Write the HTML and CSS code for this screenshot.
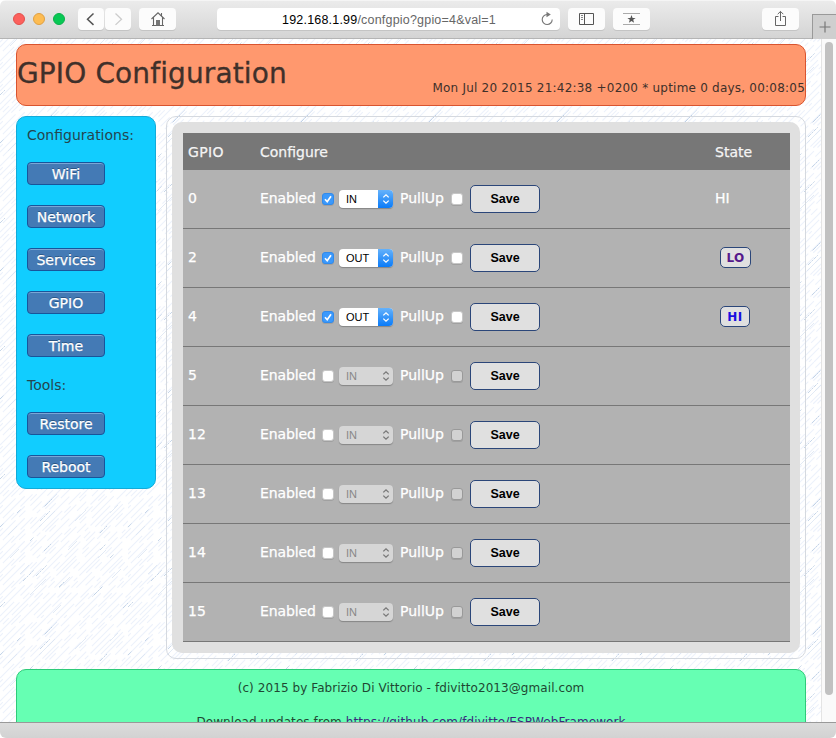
FILE: index.html
```html
<!DOCTYPE html>
<html lang="en">
<head>
<meta charset="utf-8">
<title>GPIO Configuration</title>
<link rel="stylesheet" href="styles.css">
</head>
<body>
<svg class="defs" width="0" height="0">
  <symbol id="arrows" viewBox="0 0 8 12"><path d="M1.300 4.400 4 1.800 6.700 4.400M1.300 7.600 4 10.200 6.700 7.600" fill="none" stroke="currentColor" stroke-width="1.3"/></symbol>
  <symbol id="check" viewBox="0 0 12 12"><path d="M3 6.3 5.2 8.7 9 3.2" fill="none" stroke="#fff" stroke-width="1.7"/></symbol>
</svg>
<div class="window">
  <div class="toolbar">
    <span class="light red"></span><span class="light amber"></span><span class="light green"></span>
    <span class="tool back"><svg width="26" height="22"><path d="M15.5 5.5 9.5 11.2l6 5.7" fill="none" stroke="#555" stroke-width="1.5"/></svg></span>
    <span class="tool forward"><svg width="26" height="22"><path d="m10.5 5.5 6 5.7-6 5.7" fill="none" stroke="#ccc" stroke-width="1.3"/></svg></span>
    <span class="tool home"><svg width="37" height="22"><path d="M12.5 11 19 4.8l6.500 6.200M14.500 9.500V17.400M23.500 9.500V17.400M22.500 5v3M13 17.500H25" fill="none" stroke="#666" stroke-width="1.100"/><path d="M17 12h4v5.500h-4z" fill="#777"/></svg></span>
    <div class="address"><span class="url"><b>192.168.1.99</b>/confgpio?gpio=4&amp;val=1</span>
      <svg class="reload" width="14" height="16"><path d="M7 3.500A5 5 0 1 0 12.200 8.500" fill="none" stroke="#777" stroke-width="1.100"/><path d="M6.500.8 10.800 3.600 6.500 6.300z" fill="#777"/></svg></div>
    <span class="tool side"><svg width="37" height="22"><path d="M11.500 5.500h14v11h-14zM16.500 5.500v11" fill="none" stroke="#555"/><path d="M13 7.500h2M13 9.500h2M13 11.500h2" stroke="#888"/></svg></span>
    <span class="tool fav"><svg width="37" height="22"><path d="M10 5.500h17M10 16.500h17" stroke="#aaa"/><path d="m18.500 7 1.100 2.900h3l-2.400 1.900.9 2.900-2.600-1.700-2.600 1.700.9-2.900-2.400-1.900h3z" fill="#555"/></svg></span>
    <span class="tool share"><svg width="37" height="22"><path d="M16.500 8.500h-3v9h10v-9h-3M18.500 13V3.500M15.700 6.200l2.800-2.800 2.800 2.800" fill="none" stroke="#666"/></svg></span>
    <span class="newtab"><svg width="23" height="24"><path d="M6.500 12h11M12 6.500v11" stroke="#777" stroke-width="1.200"/></svg></span>
  </div>
  <div class="viewport">
    <svg class="texture" width="821" height="683">
      <defs>
        <pattern id="rain" width="128" height="128" patternUnits="userSpaceOnUse" patternTransform="translate(0 67)">
          <g fill="none" stroke="#edf2fb" stroke-width="1.100">
            <path stroke-dasharray="22 5 9 7" d="M0 4 4 0M4 128 128 4M0 24 24 0M24 128 128 24M0 46 46 0M46 128 128 46M0 69 69 0M69 128 128 69M0 91 91 0M91 128 128 91M0 113 113 0M113 128 128 113"/>
            <path stroke-dasharray="13 8 31 11" stroke-dashoffset="17" d="M0 9 9 0M9 128 128 9M0 31 31 0M31 128 128 31M0 53 53 0M53 128 128 53M0 76 76 0M76 128 128 76M0 98 98 0M98 128 128 98M0 120 120 0M120 128 128 120"/>
            <path stroke-dasharray="17 6 5 3 28 9" stroke-dashoffset="39" d="M0 14 14 0M14 128 128 14M0 37 37 0M37 128 128 37M0 60 60 0M60 128 128 60M0 83 83 0M83 128 128 83M0 105 105 0M105 128 128 105M0 126 126 0M126 128 128 126"/>
            <path stroke-dasharray="9 12 19 8" stroke-dashoffset="5" d="M0 18 18 0M18 128 128 18M0 41 41 0M41 128 128 41M0 64 64 0M64 128 128 64M0 87 87 0M87 128 128 87M0 109 109 0M109 128 128 109"/>
          </g>
          <g fill="none" stroke="#dbe5f3" stroke-width=".8">
            <path d="M44 17 57 4M39 37 55 21M75 31 86 20M30 105 46 89M59 98 70 87M92 107 103 96M98 68 106 60M20 84 29 75M110 23 118 15M8 45 17 36M68 60 77 51M112 88 121 79M53 123 61 115M10 68 19 59"/>
          </g>
          <g fill="none" stroke="#b9cbe2" stroke-width=".8" stroke-dasharray="4 1 2 1">
            <path d="M45 16 52 9M40 31 50 21M100 43 107 36M23 91 34 80M36 86 47 75M59 97 64 92M94 105 102 97M44 61 51 54M100 60 106 54M30 51 34 47M0 117 5 112M17 23 21 19M123 118 128 113M0 37 4 33M110 68 114 64"/>
          </g>
        </pattern>
      </defs>
      <rect width="821" height="683" fill="url(#rain)"/>
    </svg>
    <div class="page">
      <header class="banner"><h1>GPIO Configuration</h1><p>Mon Jul 20 2015 21:42:38 +0200 * uptime 0 days, 00:08:05</p></header>
      <div class="columns">
        <nav class="sidebar">
          <p>Configurations:</p>
          <a>WiFi</a><a>Network</a><a>Services</a><a>GPIO</a><a>Time</a>
          <p class="tools">Tools:</p>
          <a>Restore</a><a>Reboot</a>
        </nav>
        <main class="frame"><div class="panel">
          <div class="row head"><span>GPIO</span><span>Configure</span><span>State</span></div>
          <div class="row"><span>0</span><div class="form"><span class="enabled">Enabled</span><i class="box on"><svg><use href="#check"/></svg></i><span class="select">IN<i><svg><use href="#arrows"/></svg></i></span><span class="pull">PullUp</span><i class="box"></i><button>Save</button></div><span>HI</span></div>
          <div class="row"><span>2</span><div class="form"><span class="enabled">Enabled</span><i class="box on"><svg><use href="#check"/></svg></i><span class="select">OUT<i><svg><use href="#arrows"/></svg></i></span><span class="pull">PullUp</span><i class="box"></i><button>Save</button></div><a class="state visited">LO</a></div>
          <div class="row"><span>4</span><div class="form"><span class="enabled">Enabled</span><i class="box on"><svg><use href="#check"/></svg></i><span class="select">OUT<i><svg><use href="#arrows"/></svg></i></span><span class="pull">PullUp</span><i class="box"></i><button>Save</button></div><a class="state">HI</a></div>
          <div class="row off"><span>5</span><div class="form"><span class="enabled">Enabled</span><i class="box"></i><span class="select">IN<i><svg><use href="#arrows"/></svg></i></span><span class="pull">PullUp</span><i class="box dim"></i><button>Save</button></div></div>
          <div class="row off"><span>12</span><div class="form"><span class="enabled">Enabled</span><i class="box"></i><span class="select">IN<i><svg><use href="#arrows"/></svg></i></span><span class="pull">PullUp</span><i class="box dim"></i><button>Save</button></div></div>
          <div class="row off"><span>13</span><div class="form"><span class="enabled">Enabled</span><i class="box"></i><span class="select">IN<i><svg><use href="#arrows"/></svg></i></span><span class="pull">PullUp</span><i class="box dim"></i><button>Save</button></div></div>
          <div class="row off"><span>14</span><div class="form"><span class="enabled">Enabled</span><i class="box"></i><span class="select">IN<i><svg><use href="#arrows"/></svg></i></span><span class="pull">PullUp</span><i class="box dim"></i><button>Save</button></div></div>
          <div class="row off"><span>15</span><div class="form"><span class="enabled">Enabled</span><i class="box"></i><span class="select">IN<i><svg><use href="#arrows"/></svg></i></span><span class="pull">PullUp</span><i class="box dim"></i><button>Save</button></div></div>
        </div></main>
      </div>
      <footer class="footer"><p>(c) 2015 by Fabrizio Di Vittorio - fdivitto2013@gmail.com</p><p>Download updates from <a>https://github.com/fdivitto/ESPWebFramework</a></p></footer>
    </div>
    <div class="scrollbar"><div class="thumb"></div></div>
  </div>
  <div class="bottom"></div>
</div>
</body>
</html>
```
FILE: styles.css
```css
* { box-sizing: border-box; }
body { margin: 0; background: #fff; overflow: hidden; font: 14px/18px Verdana, "DejaVu Sans", sans-serif; color: #333; }
p, h1 { margin: 0; font-weight: 400; }
svg { display: block; }
.defs { position: absolute; }
.window { width: 836px; height: 738px; display: flex; flex-direction: column; border-radius: 6px; overflow: hidden; }

.toolbar { height: 39px; flex: none; display: flex; align-items: flex-start; padding: 7px 0 0 13px; background: linear-gradient(#ebebeb, #d4d4d4); border-bottom: 1px solid #b4b4b4; border-top: 1px solid #f5f5f5; }
.light { width: 12px; height: 12px; border-radius: 50%; margin: 5px 8px 0 0; border: 1px solid; }
.red { background: #fc605c; border-color: #e2504c; }
.amber { background: #fdbc52; border-color: #dfa043; }
.green { background: #08c854; border-color: #0ab04a; }
.tool { height: 22px; width: 37px; background: #fcfcfc; border-radius: 4px; box-shadow: 0 1px 0 #c4c4c4; }
.back { width: 26px; margin-left: 5px; }
.forward { width: 26px; margin-left: 1px; }
.home { margin-left: 8px; }
.address { width: 343px; height: 22px; margin-left: 41px; border-radius: 4px; background: #fff; box-shadow: 0 1px 0 #c4c4c4; display: flex; align-items: center; font: 12.500px/22px "Liberation Sans", Arial, sans-serif; letter-spacing: .2px; color: #666; }
.url { width: 215px; margin: 2px 0 0 65px; white-space: nowrap; }
.url b { font-weight: 400; color: #000; }
.reload { margin-left: 43px; }
.side { margin-left: 8px; }
.fav { margin-left: 8px; }
.share { margin-left: 112px; }
.newtab { width: 24px; height: 25px; margin: 6px 0 0 13px; border: solid #999; border-width: 1px 0 0 1px; background: #cfcfcf; }

.viewport { height: 683px; flex: none; display: flex; position: relative; overflow: hidden; }
.texture { position: absolute; left: 0; top: 0; z-index: -1; }
.page { width: 821px; padding: 5px 15px 0 16px; }
.banner { height: 62px; border: 1px solid #d9542f; border-radius: 10px; background: #ff986e; display: flex; justify-content: space-between; color: #40302a; white-space: nowrap; }
.banner h1 { font-size: 28px; line-height: 57px; letter-spacing: .12px; -webkit-text-stroke: .3px; }
.banner p { font-size: 12px; line-height: 16px; margin-top: 35px; letter-spacing: .22px; }
.columns { display: flex; align-items: flex-start; gap: 10px; margin-top: 10px; }
.sidebar { width: 140px; height: 373px; padding: 9px 10px; border: 1px solid #12abd9; border-radius: 10px; background: #11cdff; display: flex; flex-direction: column; color: #24454e; }
.sidebar a { width: 78px; height: 23px; margin-top: 20px; border: 1px solid #18559b; border-radius: 4px; background: #447ab5; box-shadow: inset 0 1px 0 #7ba7d6; color: #fff; text-align: center; line-height: 22px; text-shadow: 0 -1px 0 #2b5685; -webkit-text-stroke: .25px; }
.sidebar p + a { margin-top: 18px; }
.sidebar .tools { margin-top: 19px; }
.frame { width: 640px; height: 543px; padding: 5px; border: 1px solid #d5d9df; border-radius: 10px; }
.panel { width: 628px; height: 531px; padding: 11px 10px 11px 11px; border-radius: 10px; background: #e0e0e0; }
.row { height: 59px; display: grid; grid-template-columns: 72px 455px 1fr; align-items: center; padding: 0 0 2px 5px; background: #b2b2b2; border-bottom: 1px solid #777; color: #fff; -webkit-text-stroke: .25px; }
.head { height: 37px; background: #777; border: 0; padding-bottom: 0; color: #f4f4f4; }
.head span:first-child { letter-spacing: .4px; }
.form { display: flex; align-items: center; }
.enabled { width: 62px; white-space: nowrap; letter-spacing: -.1px; }
.box { width: 12px; height: 12px; border-radius: 3px; background: #fff; border: 1px solid #c6c6c6; box-shadow: 0 1px 0 #a0a0a0; position: relative; top: 1px; }
.box svg { width: 12px; height: 12px; margin: -1px; }
.on { background: #3b99fc; border-color: #308aec; }
.dim { background: #d2d2d2; border-color: #999; }
.select { width: 54px; height: 18px; margin: 2px 7px 0 5px; padding-left: 7px; display: flex; justify-content: space-between; align-items: center; border-radius: 4px; background: #fff; box-shadow: 0 1px 1px #858585; color: #000; font: 11px/18px "Liberation Sans", Arial, sans-serif; -webkit-text-stroke: 0; }
.select i { width: 15px; height: 18px; padding: 3px 4px; border-radius: 0 4px 4px 0; background: linear-gradient(#65b2fb, #0a7bf8); color: #fff; }
.select i svg { width: 8px; height: 12px; }
.off .select { background: #d6d6d6; color: #888; }
.off .select i { background: none; color: #777; }
.pull { width: 51px; }
button { width: 70px; height: 28px; margin: 1px 0 0 7px; padding: 1px 0 0; border: 1px solid #2b4679; border-radius: 5px; background: #e0e0e0; color: #000; font: bold 12.500px/25px "Liberation Sans", Arial, sans-serif; -webkit-text-stroke: 0; }
.state { width: 30px; height: 21px; margin-left: 5px; border: 1px solid #2b4679; border-radius: 5px; background: #e0e0e0; color: #1a10e0; font-size: 12px; font-weight: 700; line-height: 20px; letter-spacing: .4px; text-align: center; -webkit-text-stroke: 0; }
.visited { width: 31px; color: #561a8b; }
.footer { height: 110px; margin-top: 10px; padding-top: 10px; border: 1px solid #2ecb79; border-radius: 10px; background: #66ffb3; color: #1f4732; text-align: center; font-size: 12px; line-height: 16px; letter-spacing: .08px; }
.footer p { margin-bottom: 18px; }
.footer a { color: #392a7c; text-decoration: underline; }
.scrollbar { width: 15px; padding: 3px 2px 0 3px; background: #fafafa; border-left: 1px solid #e4e4e4; }
.thumb { width: 8px; height: 653px; border-radius: 4px; background: #c1c1c1; }
.bottom { height: 16px; border-top: 1px solid #999; background: linear-gradient(#dcdcdc, #d2d2d2); }
```
